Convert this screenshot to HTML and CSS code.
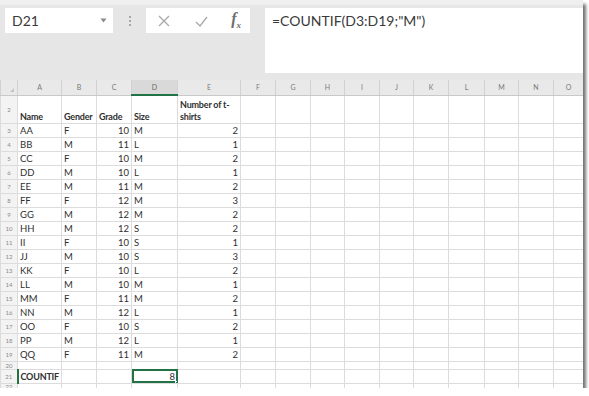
FILE: index.html
```html
<!DOCTYPE html>
<html>
<head>
<meta charset="utf-8">
<link rel="stylesheet" href="styles.css">
</head>
<body>
<div class="window">
  <div class="bar">
    <div class="namebox"><span>D21</span><svg class="arrow" width="7" height="5" viewBox="0 0 7 5"><path d="M0.5 0.5 L6.5 0.5 L3.5 4.5 Z" fill="#8a8a8a"/></svg></div>
    <div class="sep"><i></i><i></i><i></i></div>
    <div class="btns">
      <svg width="14" height="14" viewBox="0 0 14 14"><path d="M2 2 L12 12 M12 2 L2 12" stroke="#a8a8a8" stroke-width="1.3" fill="none"/></svg>
      <svg width="15" height="14" viewBox="0 0 15 14"><path d="M2 8 L6 12 L13 3" stroke="#a8a8a8" stroke-width="1.3" fill="none"/></svg>
      <span class="fx">f<sub>x</sub></span>
    </div>
    <div class="formula">=COUNTIF(D3:D19;"M")</div>
  </div>
  <table class="sheet">
    <colgroup>
      <col class="c-rh"><col class="c-a"><col class="c-b"><col class="c-c"><col class="c-d"><col class="c-e">
      <col class="c-f"><col class="c-f"><col class="c-g"><col class="c-f"><col class="c-g"><col class="c-f"><col class="c-l"><col class="c-g"><col class="c-f"><col class="c-o">
    </colgroup>
    <tr class="hdr">
      <th class="corner"><span class="tri"></span></th><th>A</th><th>B</th><th>C</th><th class="sel">D</th><th>E</th><th>F</th><th>G</th><th>H</th><th>I</th><th>J</th><th>K</th><th>L</th><th>M</th><th>N</th><th>O</th>
    </tr>
    <tr class="r2">
      <th>2</th><td class="b">Name</td><td class="b">Gender</td><td class="b">Grade</td><td class="b">Size</td><td class="b wrap">Number of t-<br>shirts</td><td></td><td></td><td></td><td></td><td></td><td></td><td></td><td></td><td></td><td></td>
    </tr>
    <tr><th>3</th><td>AA</td><td>F</td><td class="n">10</td><td>M</td><td class="n">2</td><td></td><td></td><td></td><td></td><td></td><td></td><td></td><td></td><td></td><td></td></tr>
    <tr><th>4</th><td>BB</td><td>M</td><td class="n">11</td><td>L</td><td class="n">1</td><td></td><td></td><td></td><td></td><td></td><td></td><td></td><td></td><td></td><td></td></tr>
    <tr><th>5</th><td>CC</td><td>F</td><td class="n">10</td><td>M</td><td class="n">2</td><td></td><td></td><td></td><td></td><td></td><td></td><td></td><td></td><td></td><td></td></tr>
    <tr><th>6</th><td>DD</td><td>M</td><td class="n">10</td><td>L</td><td class="n">1</td><td></td><td></td><td></td><td></td><td></td><td></td><td></td><td></td><td></td><td></td></tr>
    <tr><th>7</th><td>EE</td><td>M</td><td class="n">11</td><td>M</td><td class="n">2</td><td></td><td></td><td></td><td></td><td></td><td></td><td></td><td></td><td></td><td></td></tr>
    <tr><th>8</th><td>FF</td><td>F</td><td class="n">12</td><td>M</td><td class="n">3</td><td></td><td></td><td></td><td></td><td></td><td></td><td></td><td></td><td></td><td></td></tr>
    <tr><th>9</th><td>GG</td><td>M</td><td class="n">12</td><td>M</td><td class="n">2</td><td></td><td></td><td></td><td></td><td></td><td></td><td></td><td></td><td></td><td></td></tr>
    <tr><th>10</th><td>HH</td><td>M</td><td class="n">12</td><td>S</td><td class="n">2</td><td></td><td></td><td></td><td></td><td></td><td></td><td></td><td></td><td></td><td></td></tr>
    <tr><th>11</th><td>II</td><td>F</td><td class="n">10</td><td>S</td><td class="n">1</td><td></td><td></td><td></td><td></td><td></td><td></td><td></td><td></td><td></td><td></td></tr>
    <tr><th>12</th><td>JJ</td><td>M</td><td class="n">10</td><td>S</td><td class="n">3</td><td></td><td></td><td></td><td></td><td></td><td></td><td></td><td></td><td></td><td></td></tr>
    <tr><th>13</th><td>KK</td><td>F</td><td class="n">10</td><td>L</td><td class="n">2</td><td></td><td></td><td></td><td></td><td></td><td></td><td></td><td></td><td></td><td></td></tr>
    <tr><th>14</th><td>LL</td><td>M</td><td class="n">10</td><td>M</td><td class="n">1</td><td></td><td></td><td></td><td></td><td></td><td></td><td></td><td></td><td></td><td></td></tr>
    <tr><th>15</th><td>MM</td><td>F</td><td class="n">11</td><td>M</td><td class="n">2</td><td></td><td></td><td></td><td></td><td></td><td></td><td></td><td></td><td></td><td></td></tr>
    <tr><th>16</th><td>NN</td><td>M</td><td class="n">12</td><td>L</td><td class="n">1</td><td></td><td></td><td></td><td></td><td></td><td></td><td></td><td></td><td></td><td></td></tr>
    <tr><th>17</th><td>OO</td><td>F</td><td class="n">10</td><td>S</td><td class="n">2</td><td></td><td></td><td></td><td></td><td></td><td></td><td></td><td></td><td></td><td></td></tr>
    <tr><th>18</th><td>PP</td><td>M</td><td class="n">12</td><td>L</td><td class="n">1</td><td></td><td></td><td></td><td></td><td></td><td></td><td></td><td></td><td></td><td></td></tr>
    <tr><th>19</th><td>QQ</td><td>F</td><td class="n">11</td><td>M</td><td class="n">2</td><td></td><td></td><td></td><td></td><td></td><td></td><td></td><td></td><td></td><td></td></tr>
    <tr class="r20"><th>20</th><td></td><td></td><td></td><td></td><td></td><td></td><td></td><td></td><td></td><td></td><td></td><td></td><td></td><td></td><td></td></tr>
    <tr><th class="rsel">21</th><td class="b spill">COUNTIF</td><td></td><td></td><td class="n active">8<span class="handle"></span></td><td></td><td></td><td></td><td></td><td></td><td></td><td></td><td></td><td></td><td></td><td></td></tr>
    <tr class="r22"><th>22</th><td></td><td></td><td></td><td></td><td></td><td></td><td></td><td></td><td></td><td></td><td></td><td></td><td></td><td></td><td></td></tr>
  </table>
</div>
</body>
</html>
```

FILE: styles.css
```css
html, body {
  margin: 0;
  padding: 0;
  background: #ffffff;
}

body {
  font-family: Lato, "Liberation Sans", sans-serif;
}

.window {
  width: 583px;
  height: 388px;
  background: #ffffff;
  box-shadow: 3px 4px 3px rgba(0, 0, 0, 0.55);
  overflow: hidden;
  display: flex;
  flex-direction: column;
}

.bar {
  height: 80px;
  flex: none;
  box-sizing: border-box;
  background: #e6e6e6;
  border-top: 5px solid #efefef;
  padding-top: 3px;
  display: flex;
  align-items: flex-start;
}

.namebox {
  margin-left: 5px;
  width: 108px;
  height: 25px;
  box-sizing: border-box;
  background: #ffffff;
  display: flex;
  align-items: center;
  justify-content: space-between;
  padding: 0 6px 0 7px;
  font-size: 14px;
  color: #3a3a3a;
}

.sep {
  width: 33px;
  height: 25px;
  display: flex;
  flex-direction: column;
  align-items: center;
  justify-content: center;
  gap: 2px;
}

.sep i {
  display: block;
  width: 2px;
  height: 2px;
  background: #a8a8a8;
}

.btns {
  width: 104px;
  height: 25px;
  box-sizing: border-box;
  background: #ffffff;
  display: flex;
  align-items: center;
  justify-content: space-between;
  padding: 0 9px 0 11px;
}

.fx {
  font-family: "Liberation Serif", serif;
  font-style: italic;
  font-weight: bold;
  font-size: 16px;
  color: #6e6e6e;
  line-height: 1;
}

.fx sub {
  font-size: 9px;
}

.formula {
  flex: 1;
  margin-left: 15px;
  height: 65px;
  box-sizing: border-box;
  background: #ffffff;
  padding: 4px 7px;
  font-size: 14px;
  color: #3a3a3a;
}

.sheet {
  table-layout: fixed;
  width: 583px;
  border-collapse: collapse;
  font-size: 9.5px;
  color: #2f2f2f;
}

.c-rh { width: 17px; }
.c-a { width: 44px; }
.c-b { width: 35px; }
.c-c { width: 35px; }
.c-d { width: 46px; }
.c-e { width: 63px; }
.c-f { width: 35px; }
.c-g { width: 34px; }
.c-l { width: 36px; }
.c-o { width: 30px; }

.sheet tr {
  height: 14px;
}

.sheet td {
  border: 1px solid #dcdcdc;
  padding: 0 2px;
  white-space: nowrap;
  overflow: hidden;
  vertical-align: bottom;
  line-height: 12px;
}

.sheet th {
  background: #f3f3f3;
  border: 1px solid #dcdcdc;
  font-weight: normal;
  font-size: 6px;
  color: #8a8a8a;
  padding: 0;
  text-align: center;
  vertical-align: middle;
}

.sheet tr.hdr {
  height: 15px;
}

.sheet tr.hdr th {
  background: #e9e9e9;
  font-size: 7px;
  color: #7a7a7a;
  border-top: none;
  border-bottom: 1px solid #c9c9c9;
  border-left: 1px solid #d2d2d2;
  border-right: 1px solid #d2d2d2;
}

.sheet tr.hdr th.sel {
  background: #d9d9d9;
  border-bottom: 2px solid #217346;
  color: #666;
}

.corner {
  position: relative;
}

.tri {
  position: absolute;
  right: 3px;
  bottom: 3px;
  width: 0;
  height: 0;
  border-left: 4px solid transparent;
  border-bottom: 4px solid #c4c4c4;
}

.sheet tr.r2 {
  height: 28px;
}

.sheet tr.r20 {
  height: 8px;
}

.sheet tr.r22 th {
  vertical-align: top;
  line-height: 5px;
}

.b {
  font-weight: bold;
  font-size: 9px;
  letter-spacing: -0.2px;
}

.spill {
  overflow: visible !important;
}

.wrap {
  white-space: normal;
  line-height: 13px;
}

.n {
  text-align: right;
}

.rsel {
  border-right: 2px solid #217346 !important;
}

.active {
  position: relative;
  outline: 2px solid #217346;
  outline-offset: -2px;
}

.handle {
  position: absolute;
  right: -3px;
  bottom: -3px;
  width: 5px;
  height: 5px;
  background: #217346;
  border: 1px solid #ffffff;
  box-sizing: border-box;
}
```
